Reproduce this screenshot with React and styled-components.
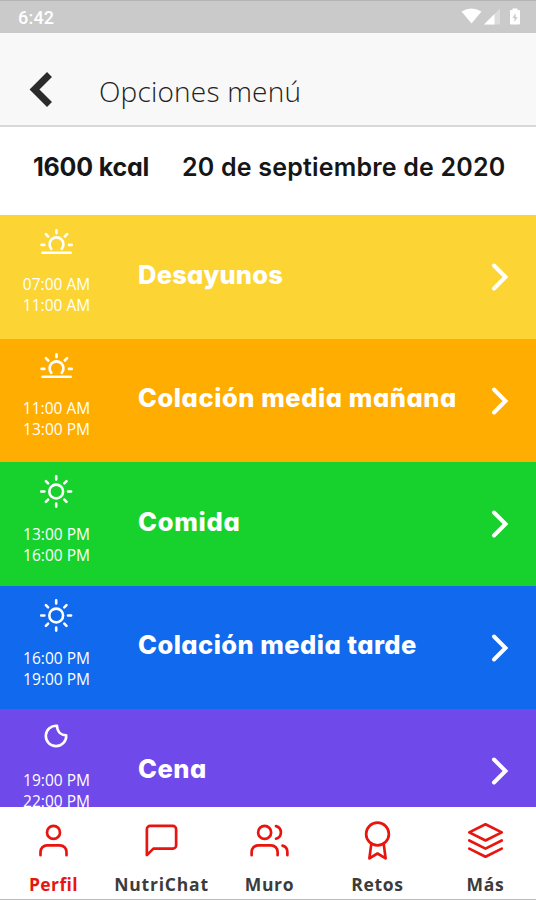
import styled, { createGlobalStyle } from 'styled-components'
import { FiUser, FiMessageSquare, FiUsers, FiAward, FiLayers } from 'react-icons/fi'

const GlobalStyle = createGlobalStyle`
  * {
    box-sizing: border-box;
  }

  body {
    margin: 0;
    overflow: hidden;
    background: #fff;
    font-family: 'Open Sans', 'Noto Sans', sans-serif;
  }
`

const Screen = styled.div`
  display: flex;
  flex-direction: column;
  width: 536px;
  height: 900px;
  overflow: hidden;
  border-bottom: 1px solid #bdbdbd;
`

const StatusBar = styled.div`
  display: flex;
  flex: none;
  align-items: center;
  justify-content: space-between;
  height: 33px;
  padding: 2px 15px 0 18px;
  background: #cacaca;
  border-top: 1px solid #b4b4b4;
  color: #fff;
`

const Clock = styled.span`
  font: 500 18px/20px Roboto, sans-serif;
  letter-spacing: 0.2px;
`

const Header = styled.header`
  display: flex;
  flex: none;
  align-items: center;
  gap: 46px;
  height: 94px;
  padding: 19px 0 0 29px;
  background: #f8f8f8;
  border-bottom: 2px solid #d8d8d8;
`

const HeaderTitle = styled.h1`
  margin: 0;
  padding-top: 4px;
  color: #222;
  font-size: 28px;
  font-weight: 350;
  line-height: 38px;
  letter-spacing: 0.2px;
`

const Summary = styled.div`
  display: flex;
  flex: none;
  gap: 33px;
  height: 88px;
  padding: 24px 0 0 33px;
  color: #161616;
  font-family: Inter, sans-serif;
  font-feature-settings: 'cv11';
  font-size: 25px;
  line-height: 32px;
  white-space: nowrap;
`

const Kcal = styled.span`
  width: 116px;
  font-weight: 700;
  letter-spacing: -0.2px;
`

const Day = styled.span`
  font-weight: 600;
  letter-spacing: 0.2px;
`

const Meals = styled.main`
  flex: 1;
  min-height: 0;
  overflow: hidden;
`

const Meal = styled.div`
  display: grid;
  grid-template-columns: 112px 1fr 48px;
  height: 123.6px;
  background: ${({ $color }) => $color};
  color: #fff;
`

const Schedule = styled.div`
  display: flex;
  flex-direction: column;
  align-items: center;
  padding: 10px 0 0 1px;
  font-size: 15.5px;
  line-height: 21px;
  white-space: nowrap;

  svg {
    flex: none;
    margin-bottom: ${({ $gap }) => $gap}px;
    margin-left: -1px;
  }
`

const MealName = styled.h2`
  margin: 0;
  padding: 43.5px 0 0 26px;
  font-family: Inter, sans-serif;
  font-feature-settings: 'cv11';
  font-size: 25.5px;
  font-weight: 800;
  line-height: 32px;
  letter-spacing: ${({ $tracking }) => $tracking}px;
  white-space: nowrap;
`

const Arrow = styled.svg`
  margin-top: 46px;
`

const TabBar = styled.nav`
  display: grid;
  flex: none;
  grid-template-columns: repeat(5, 108px);
  height: 92px;
  margin-left: -0.5px;
  background: #fff;
`

const Tab = styled.div`
  display: flex;
  flex-direction: column;
  align-items: center;
  padding-top: 13.5px;
  color: ${({ $active }) => ($active ? '#e8150f' : '#3c3c3c')};
  font-size: 17.5px;
  font-weight: 700;
  line-height: 24px;
  letter-spacing: ${({ $tracking }) => $tracking}px;

  svg {
    flex: none;
    margin-bottom: 12.5px;
    color: #e8150f;
    stroke-width: 1.65;
  }
`

const iconProps = {
  width: 36,
  height: 36,
  viewBox: '0 0 36 36',
  fill: 'none',
  stroke: 'currentColor',
  strokeWidth: 2.6,
  strokeLinecap: 'round',
}

const SunriseIcon = () => (
  <svg {...iconProps}>
    <path d="M13.3 23.8a6.9 6.9 0 1 1 10.4 0M4.5 27.7h28.2M18.5 5.3v2.8M3.6 19.9h2.7M31 19.9h2.7M7.9 9.1l2.3 2.4M29.1 9.1l-2.3 2.4" />
  </svg>
)

const SunIcon = () => (
  <svg {...iconProps}>
    <circle cx="18.2" cy="19.5" r="6.9" />
    <path d="M18.2 4.3v3.2M18.2 31.5v3.1M3.2 19.5h3.2M30 19.5h3.1M7.9 9.2l2.2 2.2M28.5 9.2l-2.2 2.2M7.9 29.8l2.2-2.2M28.5 29.8l-2.2-2.2" />
  </svg>
)

const MoonIcon = () => (
  <svg {...iconProps} strokeLinejoin="round">
    <path d="M19 6.8A10.2 10.2 0 1 0 28.2 16.3C23 16.3 19.2 13 19 6.8z" />
  </svg>
)

const BackIcon = () => (
  <svg width="24" height="38" viewBox="0 0 24 38" fill="none" stroke="#2b2b2b" strokeWidth="7">
    <path d="M20.5 4.5 5.5 19.5l15 15" />
  </svg>
)

const StatusIcons = () => (
  <svg width="62" height="20" viewBox="0 0 62 20" fill="#fff">
    <path d="M2.5 3.5Q12.5-2.5 22.5 3.5L12.5 15.500z" />
    <path d="M41 0.5v16H25z" opacity=".35" />
    <path d="M35.5 6V16.5H25z" />
    <path d="M51 3q0-1 1-1h1.500V0.500h5V2H60q1 0 1 1v12.500q0 1-1 1h-8q-1 0-1-1z" />
    <path d="M56.5 5l-3 5h2v4l3-5h-2z" fill="#cacaca" />
  </svg>
)

const MEALS = [
  { name: 'Desayunos', from: '07:00 AM', to: '11:00 AM', color: '#fcd535', Icon: SunriseIcon, gap: 13, tracking: 0.2 },
  { name: 'Colación media mañana', from: '11:00 AM', to: '13:00 PM', color: '#ffad00', Icon: SunriseIcon, gap: 13, tracking: 0.55 },
  { name: 'Comida', from: '13:00 PM', to: '16:00 PM', color: '#17d22d', Icon: SunIcon, gap: 16, tracking: 0.7 },
  { name: 'Colación media tarde', from: '16:00 PM', to: '19:00 PM', color: '#1169ed', Icon: SunIcon, gap: 16, tracking: 0.45 },
  { name: 'Cena', from: '19:00 PM', to: '22:00 PM', color: '#7049eb', Icon: MoonIcon, gap: 15, tracking: 0.5 },
]

const TABS = [
  { label: 'Perfil', Icon: FiUser, tracking: 0.4 },
  { label: 'NutriChat', Icon: FiMessageSquare, tracking: 0.8 },
  { label: 'Muro', Icon: FiUsers, tracking: 0.7 },
  { label: 'Retos', Icon: FiAward, tracking: 0.7 },
  { label: 'Más', Icon: FiLayers, tracking: 0.8 },
]

const App = () => {
  return (
    <Screen>
      <GlobalStyle />
      <StatusBar>
        <Clock>6:42</Clock>
        <StatusIcons />
      </StatusBar>
      <Header>
        <BackIcon />
        <HeaderTitle>Opciones menú</HeaderTitle>
      </Header>
      <Summary>
        <Kcal>1600 kcal</Kcal>
        <Day>20 de septiembre de 2020</Day>
      </Summary>
      <Meals>
        {MEALS.map(({ name, from, to, color, Icon, gap, tracking }) => (
          <Meal key={name} $color={color}>
            <Schedule $gap={gap}>
              <Icon />
              <span>{from}</span>
              <span>{to}</span>
            </Schedule>
            <MealName $tracking={tracking}>{name}</MealName>
            <Arrow width="24" height="32" viewBox="0 0 24 32" fill="none" stroke="#fff" strokeWidth="4" strokeLinecap="round">
              <path d="M6 4.5 17.5 16 6 27.5" />
            </Arrow>
          </Meal>
        ))}
      </Meals>
      <TabBar>
        {TABS.map(({ label, Icon, tracking }, i) => (
          <Tab key={label} $active={i === 0} $tracking={tracking}>
            <Icon size={39} />
            {label}
          </Tab>
        ))}
      </TabBar>
    </Screen>
  )
}

export default App
